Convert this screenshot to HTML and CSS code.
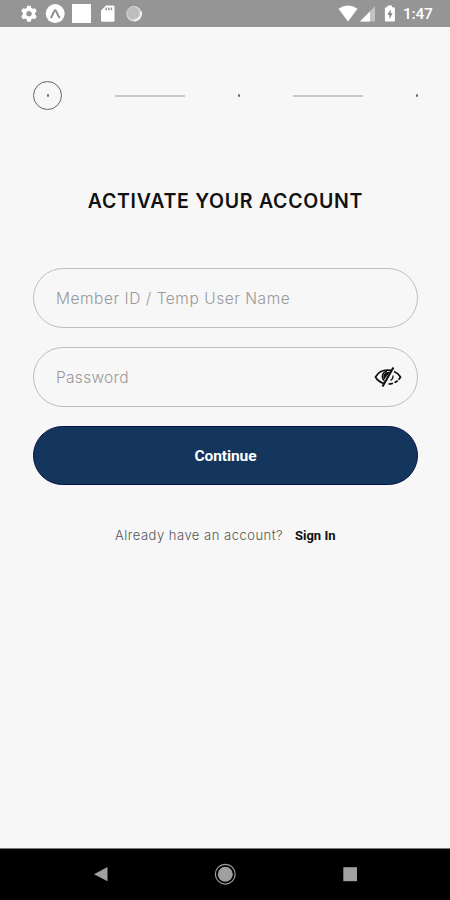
FILE: index.html
```html
<!DOCTYPE html>
<html lang="en">
<head>
<meta charset="utf-8">
<title>Activate your account</title>
<link rel="stylesheet" href="styles.css">
</head>
<body>
<div class="screen">
  <header class="status">
    <svg class="status-icons" width="150" height="27" viewBox="0 0 150 27">
      <g fill="#fff">
        <g transform="translate(29 13.7)">
          <circle r="4.5" fill="none" stroke="#fff" stroke-width="3.4"/>
          <path d="M-1.8-8h3.6l.6 3h-4.8zM-1.8 8h3.6l.6-3h-4.8z"/>
          <path transform="rotate(60)" d="M-1.8-8h3.6l.6 3h-4.8zM-1.8 8h3.6l.6-3h-4.8z"/>
          <path transform="rotate(120)" d="M-1.8-8h3.6l.6 3h-4.8zM-1.8 8h3.6l.6-3h-4.8z"/>
        </g>
        <circle cx="55.2" cy="13.6" r="9.5"/>
        <path d="M51.2 17.2c1.7-1.6 2.6-7 4-7s2.3 5.400 4 7" fill="none" stroke="#8d8d8d" stroke-width="2" stroke-linecap="round"/>
        <path d="M72 4h19v19H72z"/>
        <path d="M106 5.500h7q1.500 0 1.500 1.500v13.200q0 1.500-1.500 1.500h-10.500q-1.500 0-1.500-1.500v-9.700z"/>
        <path d="M106.200 7.500v2.700M108.800 7.500v2.700M111.400 7.500v2.700" stroke="#969696" stroke-width="1.500"/>
        <circle cx="134" cy="13.700" r="7.700" fill="#d4d4d4"/>
        <circle cx="133.200" cy="13" r="6" fill="#bdbdbd"/>
        <path d="M141 11.500a7.300 7.300 0 0 1-7 9.200" fill="none" stroke="#f5f5f5" stroke-width="1.500"/>
      </g>
    </svg>
    <div class="status-right">
      <svg width="60" height="27" viewBox="0 0 60 27">
        <path d="M-.5 8.800Q9 2 18.500 8.800L9 21.500z" fill="#fff"/>
        <path d="M36 6v15.500H21z" fill="#c2c2c2"/>
        <path d="M31 11.500v10H21z" fill="#fff"/>
        <path d="M48.500 5.500h4.500v1.700h1.700q1.200 0 1.200 1.200v12q0 1.200-1.200 1.200h-7.600q-1.200 0-1.200-1.200v-12q0-1.200 1.200-1.200h1.400z" fill="#fff"/>
        <path d="M51.800 9.200l-3.500 5.800h2.100v4.200l3.300-5.900h-1.900z" fill="#8a8a8a"/>
      </svg>
      <span class="clock">1:47</span>
    </div>
  </header>
  <main class="content">
    <div class="steps">
      <span class="step step-current"><i class="dot"></i></span>
      <span class="line"></span>
      <i class="dot"></i>
      <span class="line"></span>
      <i class="dot"></i>
    </div>
    <h1 class="title">ACTIVATE YOUR ACCOUNT</h1>
    <form class="form">
      <div class="field"><span class="hint hint-member">Member ID / Temp User Name</span></div>
      <div class="field">
        <span class="hint hint-password">Password</span>
        <svg class="eye" width="28" height="22" viewBox="0 0 28 22" fill="none" stroke="#111" stroke-width="1.700">
          <path d="M10 17.500C6 16.200 3 14 1.500 11 4 6.500 8.500 4 13.500 4l3.500.4"/>
          <path d="M20 5.500c3 1.100 5 3 6.500 5.500-1.300 2.500-3.300 4.400-6 5.500" stroke-dasharray="12 1.200"/>
          <path d="M19 17.200q-2.200.8-4.500.8"/>
          <path d="M10.300 14.800C6.800 11.500 8.300 6 13 5.200" stroke-width="1.500"/>
          <path d="M15.500 6L10 13q-1-4 1.500-6z" fill="#111" stroke-width="1"/>
          <path d="M18.800 9.500q.8 3-2.300 5" stroke-width="1.300"/>
          <path d="M19.400 1.500L8.500 20.500" stroke-width="2.100"/>
        </svg>
      </div>
      <button class="button" type="button">Continue</button>
    </form>
    <p class="signin"><span class="question">Already have an account?</span><a class="link">Sign In</a></p>
  </main>
  <nav class="navbar">
    <svg width="450" height="51" viewBox="0 0 450 51">
      <path d="M94 25.200l13.500-7.200v14.200z" fill="#a0a0a0"/>
      <circle cx="225.300" cy="25.200" r="9.900" fill="none" stroke="#a0a0a0" stroke-width="1.200"/>
      <circle cx="225.300" cy="25.200" r="7.500" fill="#a0a0a0"/>
      <path d="M343.300 18.200h13.700v14h-13.700z" fill="#a0a0a0"/>
    </svg>
  </nav>
</div>
</body>
</html>
```
FILE: styles.css
```css
* { box-sizing: border-box; }
body { margin: 0; background: #f7f7f7; font-family: Inter, "Liberation Sans", sans-serif; }
.screen { display: flex; flex-direction: column; width: 450px; height: 900px; overflow: hidden; }
.status { display: flex; justify-content: space-between; height: 27px; flex: none; background: #959595; padding-right: 17px; }
.status svg { display: block; overflow: visible; }
.status-right { display: flex; align-items: center; gap: 4px; }
.clock { width: 30px; font: 500 15.5px/27px Roboto, sans-serif; color: #fff; letter-spacing: -.2px; white-space: nowrap; padding-top: 2px; }
.content { flex: 1; padding: 54px 32px 0 33px; }
.steps { display: flex; align-items: center; justify-content: space-between; height: 29px; }
.step-current { display: flex; align-items: center; justify-content: center; width: 29px; height: 29px; border: 1px solid #666; border-radius: 50%; }
.dot { display: block; width: 2px; height: 3px; border-radius: 1px; background: #707070; }
.line { width: 70px; height: 2px; background: #c9c9c9; }
.title { margin: 76px 0 0; height: 30px; text-align: center; font-size: 19.5px; line-height: 30px; font-weight: 600; letter-spacing: .73px; color: #111; white-space: nowrap; }
.form { display: grid; gap: 19px; margin-top: 52px; }
.field { display: flex; align-items: center; justify-content: space-between; height: 60px; border: 1px solid #bdbdbd; border-radius: 30px; padding: 0 15px 0 22px; }
.hint { font-size: 15.5px; font-weight: 300; color: #999; white-space: nowrap; }
.hint-member { letter-spacing: .55px; }
.hint-password { letter-spacing: .3px; }
.button { height: 59px; border: 1px solid #06104a; border-radius: 30px; background: #14365c; color: #fff; font: 700 15.5px Roboto, sans-serif; letter-spacing: -.1px; padding: 0; }
.signin { display: flex; margin: 40px 0 0 82px; height: 20px; line-height: 20px; white-space: nowrap; }
.question { width: 180px; font-size: 13px; font-weight: 300; color: #555; letter-spacing: .5px; }
.link { font: 700 13px/21px Roboto, sans-serif; color: #111; }
.navbar { height: 52px; flex: none; background: #000; border-top: 1px solid #777; }
.navbar svg { display: block; }
```
